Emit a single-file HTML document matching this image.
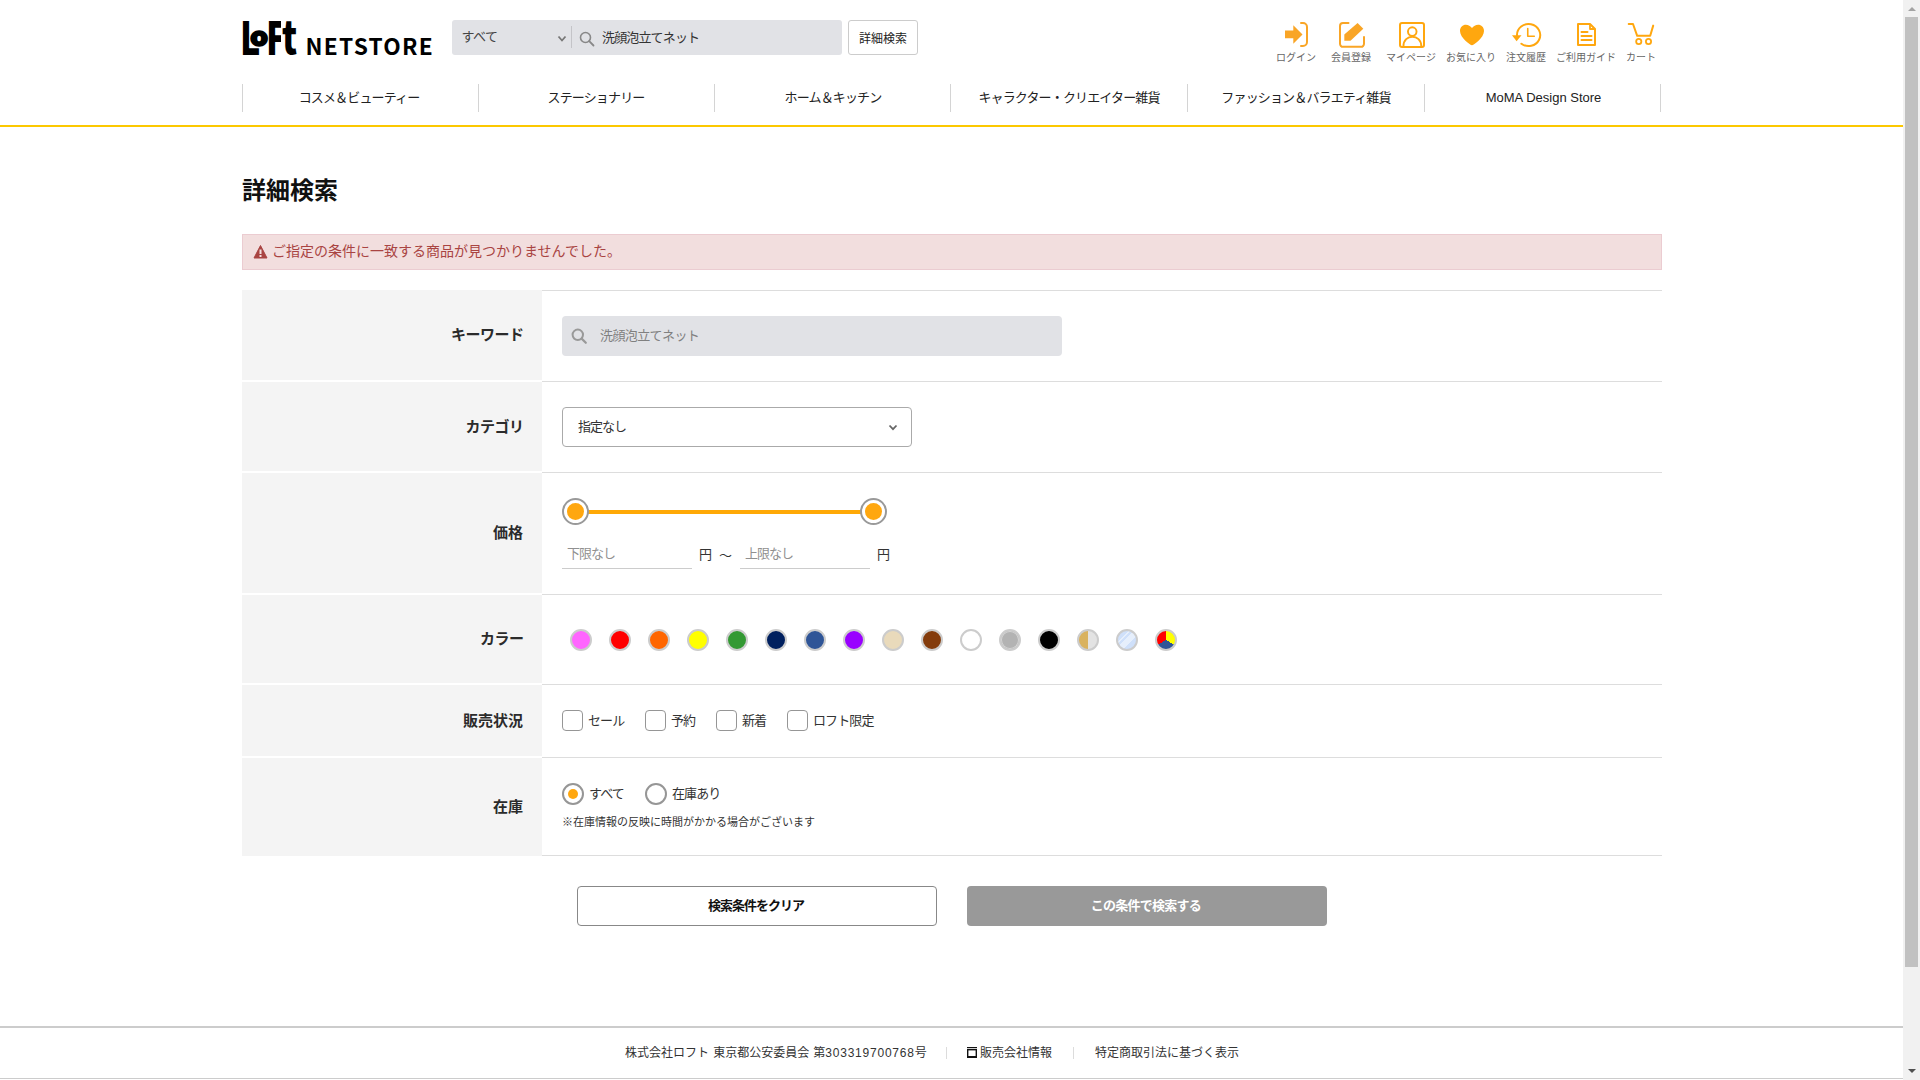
<!DOCTYPE html>
<html lang="ja">
<head>
<meta charset="utf-8">
<title>詳細検索 | ロフトネットストア</title>
<style>
*{box-sizing:border-box;margin:0;padding:0}
html,body{width:1920px;height:1080px;overflow:hidden;background:#fff}
body{font-family:"Liberation Sans","Noto Sans CJK JP",sans-serif;color:#333;font-size:14px;position:relative}
.abs{position:absolute}
/* scrollbar */
#sb{position:absolute;left:1903px;top:0;width:17px;height:1080px;background:#f1f1f1}
#sb .thumb{position:absolute;left:2px;top:17px;width:13px;height:950px;background:#c1c1c1}
#sb .up{position:absolute;left:4.500px;top:7px;width:0;height:0;border-left:4px solid transparent;border-right:4px solid transparent;border-bottom:4px solid #a3a3a3}
#sb .dn{position:absolute;left:4.500px;top:1069px;width:0;height:0;border-left:4px solid transparent;border-right:4px solid transparent;border-top:4px solid #505050}
#page{position:absolute;left:0;top:0;width:1903px;height:1080px;overflow:hidden}
/* header */
#yline{position:absolute;left:0;top:125px;width:1903px;height:2px;background:#fcc800}
#logo{position:absolute;left:242px;top:14px;height:48px;white-space:nowrap;color:#000}
#search{position:absolute;left:452px;top:20px;width:390px;height:35px;background:#e1e2e6;border-radius:3px}
#search .sel{position:absolute;left:9.500px;top:0;line-height:34px;font-size:13px;color:#444;letter-spacing:-.5px}
#search .div{position:absolute;left:119px;top:6px;width:1px;height:22px;background:#c4c4c8}
#search .kw{position:absolute;left:150px;top:0;line-height:35px;font-size:13px;color:#333;letter-spacing:-.85px}
#dbtn{position:absolute;left:848px;top:20px;width:70px;height:35px;border:1px solid #ccc;border-radius:3px;font-size:12px;line-height:37px;text-align:center;color:#222;background:#fff}
.hi{position:absolute;top:53px;font-size:10px;line-height:10px;color:#666;white-space:nowrap;transform:translateX(-50%)}
.nav{position:absolute;top:84px;height:28px;width:237px;border-left:1px solid #d4d4d4;text-align:center;line-height:28px;font-size:13px;color:#222;white-space:nowrap}
.nav.jp{letter-spacing:-.85px}
/* main */
#title{position:absolute;left:242px;top:173px;font-size:24px;line-height:36px;font-weight:bold;color:#111}
#alert{position:absolute;left:242px;top:234px;width:1420px;height:36px;background:#f2dede;border:1px solid #ebccd1;color:#a94442;font-size:14px;line-height:32px;padding-left:29px;white-space:nowrap}
.lab{position:absolute;left:242px;width:300px;background:#f4f4f4;text-align:right;padding-right:19px;font-weight:bold;font-size:15px;color:#2b2b2b}
.lab.k{letter-spacing:-.5px;padding-right:18.5px}
.ln{position:absolute;left:542px;width:1120px;height:1px;background:#ddd}
.t13{font-size:13px;color:#333;white-space:nowrap}
.cb{position:absolute;top:710px;width:21px;height:21px;border:1px solid #969696;border-radius:4px;background:#fff}
.sw{position:absolute;top:629px;width:22px;height:22px;border-radius:50%;border:2px solid #ccc}
.btn{position:absolute;top:886px;width:360px;height:40px;border-radius:4px;font-size:13px;font-weight:bold;text-align:center;line-height:38px}
.knob{top:498px;width:27px;height:27px;border-radius:50%;border:2px solid #999;background:#fff}
.knob:after{content:"";position:absolute;left:3px;top:3px;width:17px;height:17px;border-radius:50%;background:#ffa70f}
.rd{width:22px;height:22px;border-radius:50%;border:2px solid #969696;background:#fff}
.rd i{position:absolute;left:4px;top:4px;width:10px;height:10px;border-radius:50%;background:#ffa70f}
.lf{position:absolute;left:0;top:0;width:60px;height:48px}
.lf b{position:absolute;display:block;font-family:"Noto Sans CJK JP","Liberation Sans",sans-serif;font-weight:900;font-size:40px;line-height:40px;transform-origin:0 0;color:#000}
.lf i{position:absolute;display:block;overflow:hidden;font-style:normal}
.ns{position:absolute;left:63.6px;top:13.6px;font-family:"Noto Sans CJK JP","Liberation Sans",sans-serif;font-weight:bold;font-size:22.7px;line-height:36px;letter-spacing:1.25px}
/* footer */
#fl1{position:absolute;left:0;top:1026px;width:1903px;height:2px;background:#ccc}
#fl2{position:absolute;left:0;top:1078px;width:1903px;height:1px;background:#ccc}
.ft{position:absolute;top:1044px;font-size:12px;line-height:18px;color:#333;white-space:nowrap}
</style>
</head>
<body>
<div id="page">
<div id="logo"><span class="lf"><b style="left:-1.6px;top:-1.2px;transform:scale(.853,1.134)">L</b><b style="left:8.3px;top:7.6px;font-size:26px;line-height:26px;-webkit-text-stroke:1.6px #000;transform:scale(1.1,1.02)">o</b><i style="left:24.4px;top:0;width:14.6px;height:48px"><b style="left:0;top:-1.2px;transform:scale(.853,1.134)">F</b></i><b style="left:40.4px;top:-2.2px;transform:scale(.853,1.134)">t</b></span><span class="ns">NETSTORE</span></div>
<div id="search">
  <span class="sel">すべて</span>
  <svg class="abs" style="left:105px;top:15px" width="10" height="8" viewBox="0 0 10 8"><path d="M1.5 1.5 L5 5.5 L8.5 1.5" fill="none" stroke="#777" stroke-width="1.8"/></svg>
  <div class="div"></div>
  <svg class="abs" style="left:127px;top:11px" width="16" height="16" viewBox="0 0 16 16"><circle cx="6.5" cy="6.5" r="5" fill="none" stroke="#888" stroke-width="1.6"/><path d="M10.2 10.2 L14.5 14.5" stroke="#888" stroke-width="1.8" stroke-linecap="round"/></svg>
  <span class="kw">洗顔泡立てネット</span>
</div>
<div id="dbtn">詳細検索</div>
<svg class="abs" style="left:1270px;top:15px" width="400" height="40" viewBox="1270 15 400 40" fill="none">
<g stroke="#f9a526" stroke-width="2" stroke-linecap="round" stroke-linejoin="round">
<path d="M1301 23 H1303 A4 4 0 0 1 1307 27 V42 A4 4 0 0 1 1303 46 H1301"/>
<path d="M1348.500 23 H1343 A3 3 0 0 0 1340 26 V43.800 A3 3 0 0 0 1343 46.800 H1361 A3 3 0 0 0 1364 43.800 V37"/>
</g>
<path d="M1285 30.500 H1293.300 V25.200 L1302.500 34.400 L1293.300 43.700 V38.300 H1285 Z" fill="#f9a526"/>
<path d="M1357.600 23 L1363.300 28.700 L1350.500 40.800 H1344.300 V34.600 Z" fill="#f9a526"/>
<g stroke="#ffa70f" stroke-width="2" stroke-linejoin="round">
<rect x="1400" y="23" width="24" height="24" rx="2"/>
<circle cx="1412.250" cy="31.600" r="4.300" stroke-width="1.900"/>
<path d="M1403.400 46.500 C1403.400 33.500 1421.300 33.500 1421.300 46.500" stroke-width="1.900"/>
<path d="M1517 35.300 A11.600 11.050 0 1 1 1521.400 43.700" stroke-linecap="round"/>
<path d="M1527.750 28.500 V36.250 H1534.300" stroke-linecap="round" stroke-width="1.600"/>
<path d="M1578 24 H1590 L1595 29 V45 H1578 Z"/>
<path d="M1590 24 V29 H1595" stroke-width="1.800"/>
<path d="M1581.500 32 H1587.500 M1581.500 36 H1591.500 M1581.500 40 H1591.500" stroke-linecap="round"/>
<path d="M1628.700 24 H1633 L1637.200 35.800 H1650.200 L1653.200 25.600" stroke-linecap="round"/>
<circle cx="1638.750" cy="41.500" r="2.600" stroke-width="1.800"/>
<circle cx="1648.500" cy="41.500" r="2.600" stroke-width="1.800"/>
</g>
<path d="M1512 35.250 H1521.500 L1516.600 41.200 Z" fill="#ffa70f"/>
<path d="M1472 45.300 C1470.500 45.300 1460 38 1460 31 C1460 27.300 1462.700 24.800 1465.800 24.800 C1468.300 24.800 1470.600 26.200 1472 28 C1473.400 26.200 1475.700 24.800 1478.200 24.800 C1481.300 24.800 1484 27.300 1484 31 C1484 38 1473.500 45.300 1472 45.300 Z" fill="#ffa70f"/>
</svg>

<div class="hi" style="left:1296px">ログイン</div>
<div class="hi" style="left:1351px">会員登録</div>
<div class="hi" style="left:1411px">マイページ</div>
<div class="hi" style="left:1471px">お気に入り</div>
<div class="hi" style="left:1526px">注文履歴</div>
<div class="hi" style="left:1586px">ご利用ガイド</div>
<div class="hi" style="left:1641px">カート</div>
<div class="nav jp" style="left:242px;padding-right:4px">コスメ＆ビューティー</div>
<div class="nav jp" style="left:478px;padding-right:2px">ステーショナリー</div>
<div class="nav jp" style="left:714px">ホーム＆キッチン</div>
<div class="nav jp" style="left:950px">キャラクター・クリエイター雑貨</div>
<div class="nav jp" style="left:1187px">ファッション＆バラエティ雑貨</div>
<div class="nav" style="left:1424px;border-right:1px solid #d4d4d4;padding-left:2px">MoMA Design Store</div>
<div id="yline"></div>

<div id="title">詳細検索</div>
<div id="alert"><svg class="abs" style="left:10px;top:9px" width="15" height="15" viewBox="0 0 15 15"><path d="M7.5 1.500 L14 14 L1 14 Z" fill="#a94442" stroke="#a94442" stroke-width="1" stroke-linejoin="round"/><rect x="6.500" y="5.500" width="2" height="4.500" fill="#f2dede"/><rect x="6.500" y="11" width="2" height="2" fill="#f2dede"/></svg>ご指定の条件に一致する商品が見つかりませんでした。</div>

<div class="lab k" style="top:290px;height:90px;line-height:89px">キーワード</div>
<div class="lab k" style="top:382px;height:89px;line-height:89px">カテゴリ</div>
<div class="lab" style="top:473px;height:120px;line-height:120px">価格</div>
<div class="lab k" style="top:595px;height:88px;line-height:87px">カラー</div>
<div class="lab" style="top:685px;height:71px;line-height:72px">販売状況</div>
<div class="lab" style="top:758px;height:98px;line-height:98px">在庫</div>
<div class="ln" style="top:290px"></div>
<div class="ln" style="top:381px"></div>
<div class="ln" style="top:472px"></div>
<div class="ln" style="top:594px"></div>
<div class="ln" style="top:684px"></div>
<div class="ln" style="top:757px"></div>
<div class="ln" style="top:855px"></div>

<!-- keyword -->
<div class="abs" style="left:562px;top:316px;width:500px;height:40px;background:#e1e2e6;border-radius:4px">
  <svg class="abs" style="left:9px;top:12px" width="17" height="17" viewBox="0 0 17 17"><circle cx="6.800" cy="6.800" r="5.200" fill="none" stroke="#999" stroke-width="2"/><path d="M10.900 10.900 L14.800 14.800" stroke="#999" stroke-width="2.200" stroke-linecap="round"/></svg>
  <span class="abs t13" style="left:38px;top:0;line-height:40px;color:#808080;letter-spacing:-.6px">洗顔泡立てネット</span>
</div>
<!-- category -->
<div class="abs" style="left:562px;top:407px;width:350px;height:40px;background:#fff;border:1px solid #aaa;border-radius:4px">
  <span class="abs t13" style="left:15px;top:0;line-height:37px;letter-spacing:-1px">指定なし</span>
  <svg class="abs" style="left:325px;top:16px" width="10" height="8" viewBox="0 0 10 8"><path d="M1.5 1.5 L5 5.2 L8.5 1.5" fill="none" stroke="#666" stroke-width="1.8"/></svg>
</div>
<!-- price -->
<div class="abs" style="left:575px;top:509.500px;width:298px;height:4px;background:#ffa906"></div>
<div class="abs knob" style="left:562px"></div>
<div class="abs knob" style="left:860px"></div>
<span class="abs t13" style="left:567px;top:545px;color:#909090;line-height:18px;letter-spacing:-1px">下限なし</span>
<div class="abs" style="left:562px;top:568px;width:130px;height:1px;background:#ccc"></div>
<span class="abs t13" style="left:699px;top:546px;line-height:18px">円</span>
<span class="abs t13" style="left:719px;top:547px;line-height:18px">～</span>
<span class="abs t13" style="left:745px;top:545px;color:#909090;line-height:18px;letter-spacing:-1px">上限なし</span>
<div class="abs" style="left:740px;top:568px;width:130px;height:1px;background:#ccc"></div>
<span class="abs t13" style="left:877px;top:546px;line-height:18px">円</span>
<!-- colors -->
<div class="sw" style="left:570px;background:#ff66ff"></div>
<div class="sw" style="left:609px;background:#ff0000"></div>
<div class="sw" style="left:648px;background:#ff6600"></div>
<div class="sw" style="left:687px;background:#ffff00"></div>
<div class="sw" style="left:726px;background:#339933"></div>
<div class="sw" style="left:765px;background:#00205f"></div>
<div class="sw" style="left:804px;background:#2f5597"></div>
<div class="sw" style="left:843px;background:#9900ff"></div>
<div class="sw" style="left:882px;background:#e9dabb"></div>
<div class="sw" style="left:921px;background:#843c0c"></div>
<div class="sw" style="left:960px;background:#ffffff"></div>
<div class="sw" style="left:999px;background:#b3b3b3;box-shadow:inset 0 0 0 1px #d6d6d6"></div>
<div class="sw" style="left:1038px;background:#000000"></div>
<div class="sw" style="left:1077px;background:linear-gradient(90deg,#d9b25f 0,#d9b25f 50%,#e3e3e3 50%,#e3e3e3 100%)"></div>
<div class="sw" style="left:1116px;background:linear-gradient(135deg,#cfe0fa 0,#cfe0fa 28%,#e6effc 28%,#e6effc 36%,#cfe0fa 36%,#cfe0fa 42%,#e6effc 42%,#e6effc 66%,#cfe0fa 66%,#cfe0fa 100%)"></div>
<div class="sw" style="left:1155px;background:conic-gradient(#ffff00 0deg,#ffff00 120deg,#2f5597 120deg,#2f5597 240deg,#ff0000 240deg,#ff0000 360deg)"></div>

<!-- status -->
<div class="cb" style="left:562px"></div><span class="abs t13" style="left:588px;top:711px;line-height:20px;letter-spacing:-.9px">セール</span>
<div class="cb" style="left:645px"></div><span class="abs t13" style="left:671px;top:711px;line-height:20px;letter-spacing:-.9px">予約</span>
<div class="cb" style="left:716px"></div><span class="abs t13" style="left:742px;top:711px;line-height:20px;letter-spacing:-.9px">新着</span>
<div class="cb" style="left:787px"></div><span class="abs t13" style="left:813px;top:711px;line-height:20px;letter-spacing:-.9px">ロフト限定</span>
<!-- stock -->
<div class="abs rd" style="left:562px;top:783px"><i></i></div><span class="abs t13" style="left:589px;top:784px;line-height:20px;letter-spacing:-.9px">すべて</span>
<div class="abs rd" style="left:645px;top:783px"></div><span class="abs t13" style="left:672px;top:784px;line-height:20px;letter-spacing:-.9px">在庫あり</span>
<span class="abs t13" style="left:562px;top:813px;line-height:18px;font-size:11px">※在庫情報の反映に時間がかかる場合がございます</span>
<!-- buttons -->
<div class="btn" style="left:577px;border:1px solid #888;background:#fff;color:#111;letter-spacing:-1px;padding-right:2px">検索条件をクリア</div>
<div class="btn" style="left:967px;background:#999;color:#fff;line-height:40px;letter-spacing:-.75px;padding-right:2px">この条件で検索する</div>

<div id="fl1"></div>
<span class="ft" style="left:625px;word-spacing:.8px">株式会社ロフト 東京都公安委員会 第<span style="letter-spacing:.78px">303319700768</span>号</span>
<div class="abs" style="left:946px;top:1047px;width:1px;height:12px;background:#dcdcdc"></div>
<svg class="abs" style="left:967px;top:1047px" width="10" height="11" viewBox="0 0 10 11"><rect x="0" y="0" width="10" height="1.200" fill="#111"/><rect x="0.700" y="2.700" width="8.600" height="7.300" fill="none" stroke="#111" stroke-width="1.400"/><rect x="0" y="9" width="10" height="2" fill="#111"/></svg>
<span class="ft" style="left:980px">販売会社情報</span>
<div class="abs" style="left:1073px;top:1047px;width:1px;height:12px;background:#dcdcdc"></div>
<span class="ft" style="left:1095px">特定商取引法に基づく表示</span>
<div id="fl2"></div>

</div>
<div id="sb"><div class="up"></div><div class="thumb"></div><div class="dn"></div></div>
</body>
</html>
